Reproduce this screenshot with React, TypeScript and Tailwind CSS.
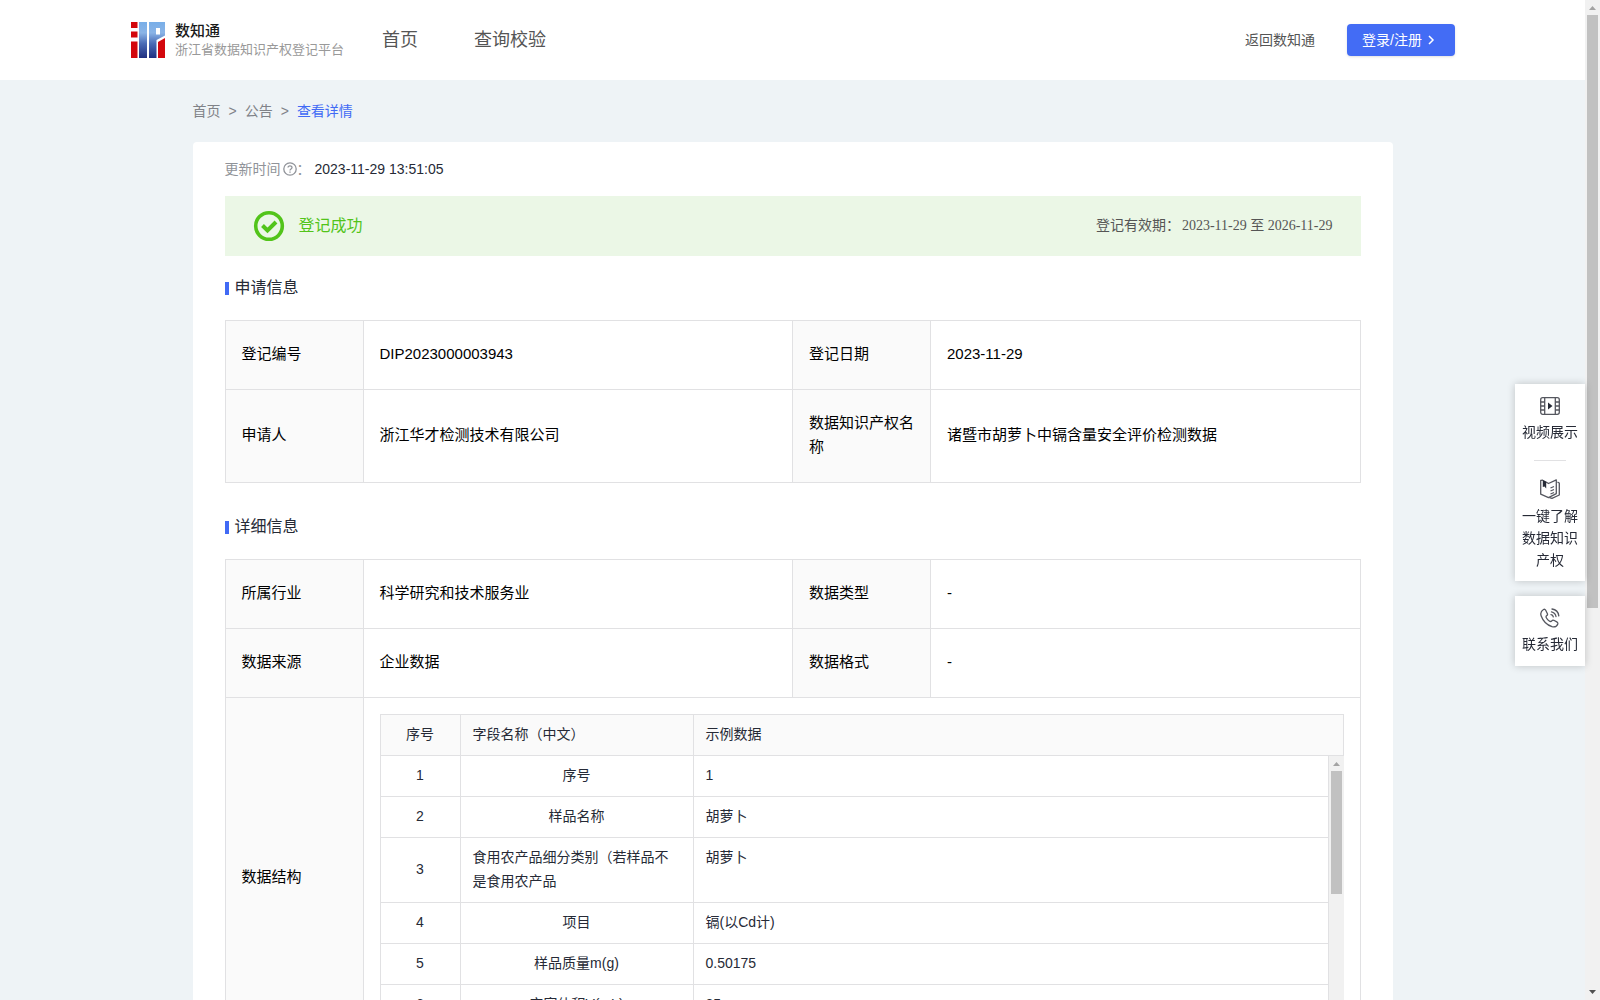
import React from "react";

const gridLine = "border border-[#e1e1e3]";

function Logo() {
  return (
    <svg className="shrink-0" width="34" height="36" viewBox="0 0 34 36" aria-hidden="true">
      <defs>
        <linearGradient id="logoBlue" x1="0" y1="0" x2="0" y2="36" gradientUnits="userSpaceOnUse">
          <stop offset="0" stopColor="#78aee8" />
          <stop offset="0.3" stopColor="#8ab4e6" />
          <stop offset="0.6" stopColor="#4a6bb5" />
          <stop offset="1" stopColor="#1f2f80" />
        </linearGradient>
      </defs>
      <path d="M0 0H6.500V6H0ZM0 9.500H6.500V15.500H0ZM0 19.500H6.500V36H0Z" fill="#d3070d" />
      <path d="M8 0H16V36H8ZM18 0H34V13.500L25.500 18V36H18ZM25 6V12.500H29V6Z" fill="url(#logoBlue)" fillRule="evenodd" />
      <path d="M27 20L34 16V36H27Z" fill="#d3070d" />
    </svg>
  );
}

function Scrollbar({ thumb, end }: { thumb: string; end?: boolean }) {
  return (
    <div aria-hidden="true" className="flex w-[15px] shrink-0 flex-col items-center bg-[#f1f1f1]">
      <svg className="shrink-0" width="15" height="15" viewBox="0 0 15 15">
        <path d="M4 10L7.500 6L11 10Z" fill="#a3a3a3" />
      </svg>
      <div className={`w-[11px] shrink-0 bg-[#c1c1c1] ${thumb}`} />
      {end && (
        <svg className="mt-auto shrink-0" width="15" height="15" viewBox="0 0 15 15">
          <path d="M4 5L7.500 9L11 5Z" fill="#505050" />
        </svg>
      )}
    </div>
  );
}

function SectionTitle({ children }: { children: React.ReactNode }) {
  return (
    <h2 className="flex items-center gap-1.5 text-base leading-6 text-[#262a36]">
      <span className="h-[13px] w-1 bg-[#416af5]" />
      {children}
    </h2>
  );
}

function Label({ children }: { children: React.ReactNode }) {
  return <th scope="row" className={`${gridLine} bg-[#fafafa] px-4 pt-[21px] pb-[23px] text-left font-normal`}>{children}</th>;
}

function Value({ children }: { children: React.ReactNode }) {
  return <td className={`${gridLine} px-4 pt-[21px] pb-[23px]`}>{children}</td>;
}

function InfoTable({ rows, children }: { rows: string[][]; children?: React.ReactNode }) {
  return (
    <table className="w-full table-fixed border-collapse text-[15px] leading-6 text-black">
      <colgroup>
        <col className="w-[138px]" />
        <col />
        <col className="w-[138px]" />
        <col />
      </colgroup>
      <tbody>
        {rows.map(([a, b, c, d]) => (
          <tr key={a}>
            <Label>{a}</Label>
            <Value>{b}</Value>
            <Label>{c}</Label>
            <Value>{d}</Value>
          </tr>
        ))}
        {children}
      </tbody>
    </table>
  );
}

const fields = [
  ["1", "序号", "1"],
  ["2", "样品名称", "胡萝卜"],
  ["3", "食用农产品细分类别（若样品不是食用农产品", "胡萝卜"],
  ["4", "项目", "镉(以Cd计)"],
  ["5", "样品质量m(g)", "0.50175"],
  ["6", "定容体积V(mL)", "25"],
];

function FieldTable() {
  return (
    <div className="text-sm leading-6 text-[#262a36]">
      <div className="flex border border-[#e1e1e3] bg-[#fafafa]">
        <div className="w-[79px] shrink-0 pt-[7px] pb-[9px] text-center">序号</div>
        <div className="w-[234px] shrink-0 border-x border-[#e1e1e3] px-3 pt-[7px] pb-[9px]">字段名称（中文）</div>
        <div className="px-3 pt-[7px] pb-[9px]">示例数据</div>
      </div>
      <div className="flex h-[286px] overflow-hidden">
        <table className="h-fit w-full flex-1 table-fixed border-collapse">
          <colgroup>
            <col className="w-20" />
            <col className="w-[233px]" />
            <col />
          </colgroup>
          <tbody>
            {fields.map(([n, name, sample]) => (
              <tr key={n}>
                <td className="border border-t-0 border-[#e1e1e3] pt-[7px] pb-[9px] text-center">{n}</td>
                <td className="border border-t-0 border-[#e1e1e3] px-3 pt-[7px] pb-[9px]">
                  <div className="mx-auto w-fit">{name}</div>
                </td>
                <td className="border border-t-0 border-[#e1e1e3] px-3 pt-[7px] pb-[9px] align-top">{sample}</td>
              </tr>
            ))}
          </tbody>
        </table>
        <Scrollbar thumb="h-[123px]" />
      </div>
    </div>
  );
}

function VideoIcon() {
  return (
    <svg width="20" height="20" viewBox="0 0 20 20" fill="none" stroke="#55575f" strokeWidth="1.300" aria-hidden="true">
      <rect x="0.700" y="1.700" width="18.600" height="16.600" rx="2" />
      <path d="M4.700 1.700V18.300M15.300 1.700V18.300M0.500 6H4.500M0.500 10H4.500M0.500 14H4.500M15.500 6H19.500M15.500 10H19.500M15.500 14H19.500" />
      <path d="M8 6.500L12.500 10L8 13.500Z" fill="#262a36" stroke="none" />
    </svg>
  );
}

function BookIcon() {
  return (
    <svg width="20" height="20" viewBox="0 0 20 20" fill="none" stroke="#55575f" strokeWidth="1.300" strokeLinejoin="round" aria-hidden="true">
      <path d="M3 1.200L0.700 1.500V15.200L8.500 18.600L16.300 14.600V0.800L8.500 4.500L6 3" />
      <path d="M17.500 3.200L19.300 4V16L12 19.300L9.500 18.600" />
      <path d="M10.500 9L14 7.500M10.500 12L14 10.500M10.500 15L14 13.500" />
      <path d="M2.800 0.800L6.200 2.500V9.500L4.500 7.500L2.800 8Z" fill="#262a36" stroke="none" />
    </svg>
  );
}

function PhoneIcon() {
  return (
    <svg width="20" height="20" viewBox="0 0 20 20" fill="none" stroke="#55575f" strokeWidth="1.300" strokeLinecap="round" strokeLinejoin="round" aria-hidden="true">
      <path d="M3.500 1.500C1 3 0.300 5.500 1.200 8C3 13 7 17 12 18.700C14.500 19.300 17 18 17.800 16C18 15 17.500 14.300 16.800 13.900L13.800 12.300C13 12 12.300 12.200 11.800 12.800C11 13.800 10.500 13.800 9.600 13.200C8.200 12.200 7 11 6.300 9.700C5.800 8.800 6 8.200 6.800 7.600C7.600 7 7.700 6.300 7.300 5.500L5.700 2.200C5.200 1.200 4.400 1 3.500 1.500Z" />
      <path d="M11.500 3.800C14 4.300 15.500 5.800 16 8.500M12 1C15.800 1.500 18.300 4 18.800 7.800M11 6.600C12.300 6.800 13 7.500 13.300 8.800" />
    </svg>
  );
}

export default function App() {
  return (
    <div className="flex h-screen overflow-hidden bg-[#eef3f6] font-['Liberation_Sans','Noto_Sans_CJK_SC',sans-serif] text-sm text-[#262a36]">
      <div className="min-w-0 flex-1 overflow-hidden">
        <header className="flex h-20 items-center bg-white px-[130px] text-[#555]">
          <a href="#home" className="flex shrink-0 items-center gap-2.5 pl-px whitespace-nowrap">
            <Logo />
            <span className="flex flex-col">
              <span className="text-[15px] leading-5 font-medium text-[#1a1a1a]">数知通</span>
              <span className="text-[13px] leading-[18px] text-[#999]">浙江省数据知识产权登记平台</span>
            </span>
          </a>
          <nav className="ml-[38px] flex gap-14 text-lg">
            <a href="#home">首页</a>
            <a href="#query">查询校验</a>
          </nav>
          <a href="#back" className="ml-auto">返回数知通</a>
          <button type="button" className="ml-8 flex h-8 w-[108px] items-center gap-1 rounded-sm bg-[#436cf5] pl-[15px] text-white shadow-sm">
            登录/注册
            <svg width="10" height="10" viewBox="0 0 10 10" fill="none" stroke="white" strokeWidth="1.500" aria-hidden="true">
              <path d="M3 1L7 5L3 9" />
            </svg>
          </button>
        </header>

        <main className="mx-auto max-w-[1200px]">
          <nav aria-label="breadcrumb" className="flex items-center gap-2 py-5 leading-[22px] text-[#808288]">
            <a href="#home">首页</a>
            <span>&gt;</span>
            <a href="#notice">公告</a>
            <span>&gt;</span>
            <a href="#detail" className="text-[#416af5]">查看详情</a>
          </nav>

          <div className="rounded bg-white px-8 pt-4 pb-8">
            <div className="flex items-center leading-[22px]">
              <span className="text-[#909399]">更新时间</span>
              <svg className="ml-0.5" width="14" height="14" viewBox="0 0 14 14" fill="none" stroke="#909399" strokeWidth="1.300" aria-hidden="true">
                <circle cx="7" cy="7" r="6.200" />
                <path d="M5 5.600C5 3.200 9 3.200 9 5.500C9 7 7 6.900 7 8.500M7 9.600V10.800" />
              </svg>
              <span className="text-[#909399]">：</span>
              <span className="ml-1">2023-11-29 13:51:05</span>
            </div>

            <div className="mt-4 flex h-[60px] items-center bg-[#ebf7e6] px-7">
              <svg width="32" height="32" viewBox="0 0 32 32" fill="none" stroke="#52c41a" aria-hidden="true">
                <circle cx="16" cy="16" r="13.300" strokeWidth="3.600" />
                <path d="M9.500 15.500L14.500 20.500L23 12" strokeWidth="4" />
              </svg>
              <span className="ml-3.5 text-base text-[#52c41a]">登记成功</span>
              <span className="ml-auto flex gap-0.5 font-['Liberation_Serif','Noto_Sans_CJK_SC',serif] text-[#555]">
                <span>登记有效期：</span>
                <span>2023-11-29 至 2026-11-29</span>
              </span>
            </div>

            <div className="mt-5 mb-5">
              <SectionTitle>申请信息</SectionTitle>
            </div>
            <InfoTable
              rows={[
                ["登记编号", "DIP2023000003943", "登记日期", "2023-11-29"],
                ["申请人", "浙江华才检测技术有限公司", "数据知识产权名称", "诸暨市胡萝卜中镉含量安全评价检测数据"],
              ]}
            />

            <div className="mt-8 mb-5">
              <SectionTitle>详细信息</SectionTitle>
            </div>
            <InfoTable
              rows={[
                ["所属行业", "科学研究和技术服务业", "数据类型", "-"],
                ["数据来源", "企业数据", "数据格式", "-"],
              ]}
            >
              <tr>
                <Label>数据结构</Label>
                <td colSpan={3} className="border border-[#e1e1e3] p-4">
                  <FieldTable />
                </td>
              </tr>
            </InfoTable>
          </div>
        </main>
      </div>

      <aside className="fixed top-96 right-[15px] flex w-[70px] flex-col gap-[15px] text-center leading-[22px]">
        <div className="flex flex-col items-center bg-white pt-3 pb-2.5 shadow-[0_0_8px_rgba(0,0,0,0.2)]">
          <a href="#video" className="flex flex-col items-center gap-[5px]">
            <VideoIcon />
            视频展示
          </a>
          <hr className="mt-[17px] mb-[18px] w-8 border-[#e1e1e3]" />
          <a href="#about" className="flex w-14 flex-col items-center gap-1.5">
            <BookIcon />
            一键了解数据知识产权
          </a>
        </div>
        <a href="#contact" className="flex flex-col items-center gap-[5px] bg-white pt-3 pb-[11px] shadow-[0_0_8px_rgba(0,0,0,0.2)]">
          <PhoneIcon />
          联系我们
        </a>
      </aside>

      <Scrollbar thumb="h-[593px]" end />
    </div>
  );
}
